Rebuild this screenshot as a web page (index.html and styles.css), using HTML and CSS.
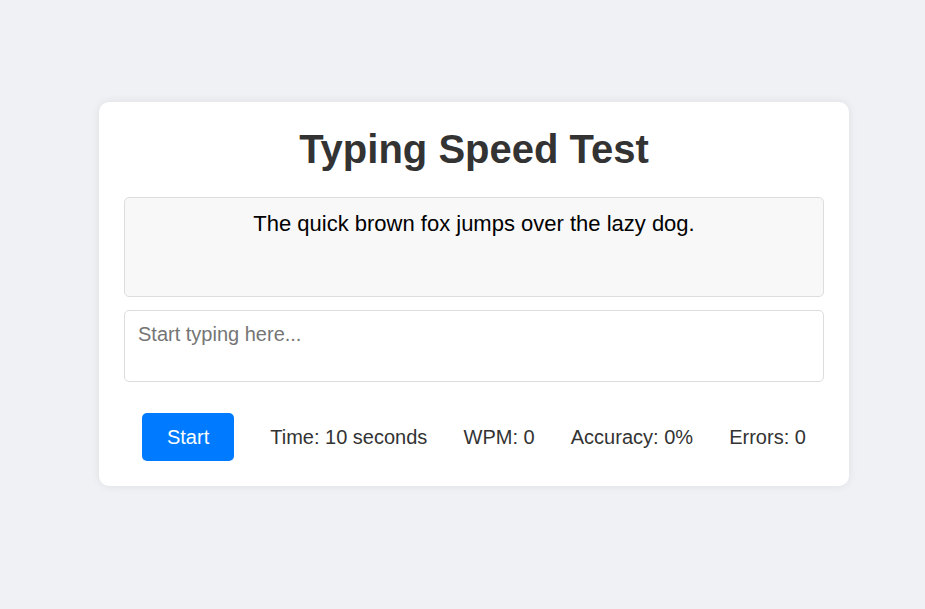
FILE: index.html
```html
<!DOCTYPE html>
<html lang="en">
<head>
<meta charset="utf-8">
<title>Typing Speed Test</title>
<link rel="stylesheet" href="styles.css">
</head>
<body>
<main class="card">
  <h1 class="title">Typing Speed Test</h1>
  <div class="sample">The quick brown fox jumps over the lazy dog.</div>
  <textarea class="entry" placeholder="Start typing here..."></textarea>
  <div class="stats">
    <button class="start-btn">Start</button>
    <span class="stat">Time: 10 seconds</span>
    <span class="stat">WPM: 0</span>
    <span class="stat">Accuracy: 0%</span>
    <span class="stat">Errors: 0</span>
  </div>
</main>
</body>
</html>
```

FILE: styles.css
```css
* { box-sizing: border-box; }

html, body {
  margin: 0;
  height: 100%;
}

body {
  background: #f0f1f5;
  font-family: "Liberation Sans", Arial, sans-serif;
  padding: 102px 0 0 99px;
  overflow: hidden;
}

.card {
  width: 750px;
  background: #ffffff;
  border-radius: 10px;
  box-shadow: 0 0 10px rgba(0, 0, 0, 0.08);
  padding: 25px 25px 25px;
  display: flex;
  flex-direction: column;
}

.title {
  margin: 0 0 25px;
  font-size: 40px;
  font-weight: bold;
  color: #333333;
  text-align: center;
  line-height: normal;
}

.sample {
  height: 100px;
  background: #f8f8f8;
  border: 1px solid #dddddd;
  border-radius: 5px;
  padding: 13px 10px;
  font-size: 22px;
  color: #000000;
  text-align: center;
}

.entry {
  display: block;
  margin-top: 13px;
  height: 72px;
  width: 100%;
  resize: none;
  border: 1px solid #dddddd;
  border-radius: 5px;
  padding: 12px 13px 10px;
  font-family: "Liberation Sans", Arial, sans-serif;
  font-size: 20px;
  line-height: normal;
  color: #333333;
  background: #ffffff;
  outline: none;
}

.entry::placeholder {
  color: #757575;
}

.stats {
  margin-top: 31px;
  display: flex;
  justify-content: space-around;
  align-items: center;
}

.start-btn {
  width: 92px;
  height: 48px;
  background: #007bff;
  color: #ffffff;
  border: none;
  border-radius: 5px;
  font-family: "Liberation Sans", Arial, sans-serif;
  font-size: 20px;
  padding: 0;
  cursor: pointer;
}

.stat {
  font-size: 20px;
  color: #333333;
}
```
